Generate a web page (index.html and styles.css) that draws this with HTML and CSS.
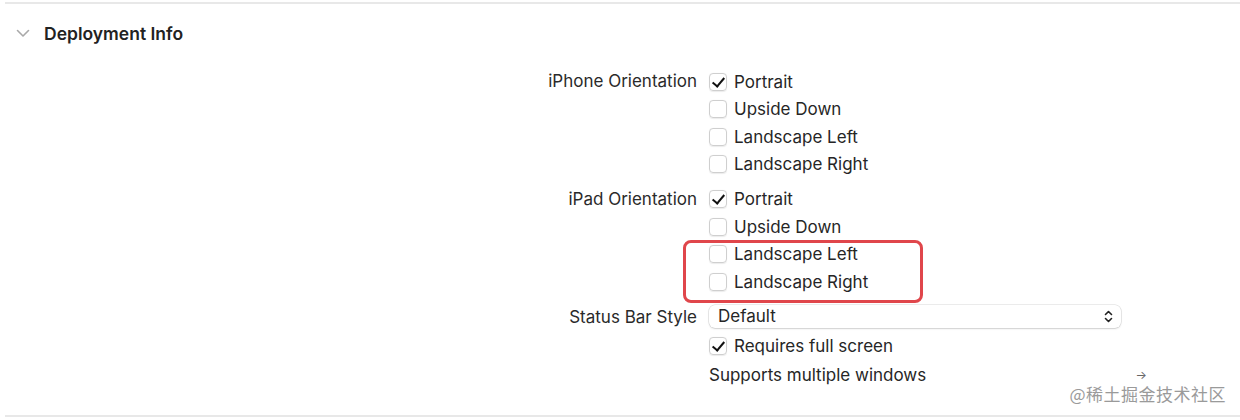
FILE: index.html
```html
<!DOCTYPE html>
<html lang="en">

<head>
    <meta charset="UTF-8">
    <title>Deployment Info</title>
    <link rel="stylesheet" href="styles.css">
</head>

<body>
    <div class="rule top"></div>

    <div class="section-head">
        <svg class="disclosure" width="14" height="9" viewBox="0 0 14 9">
            <path d="M1.5 1.5 L7 7 L12.5 1.5" fill="none" stroke="#a9a9a9" stroke-width="1.6" stroke-linecap="round" stroke-linejoin="round"/>
        </svg>
        <span class="section-title">Deployment Info</span>
    </div>

    <div class="form">
        <!-- iPhone -->
        <div class="label">iPhone Orientation</div>
        <div class="options">
            <div class="option"><span class="check on"></span>Portrait</div>
            <div class="option"><span class="check"></span>Upside Down</div>
            <div class="option"><span class="check"></span>Landscape Left</div>
            <div class="option"><span class="check"></span>Landscape Right</div>
        </div>

        <!-- iPad -->
        <div class="label group">iPad Orientation</div>
        <div class="options group">
            <div class="option"><span class="check on"></span>Portrait</div>
            <div class="option"><span class="check"></span>Upside Down</div>
            <div class="highlighted">
                <div class="option"><span class="check"></span>Landscape Left</div>
                <div class="option"><span class="check"></span>Landscape Right</div>
                <div class="marker"></div>
            </div>
        </div>

        <!-- status bar -->
        <div class="label group status">Status Bar Style</div>
        <div class="group status-ctrl">
            <div class="select">
                <span>Default</span>
                <svg width="9" height="13" viewBox="0 0 9 13">
                    <path d="M1.5 4.5 L4.5 1.5 L7.5 4.5 M1.5 8.5 L4.5 11.5 L7.5 8.5" fill="none" stroke="#222" stroke-width="1.6" stroke-linecap="round" stroke-linejoin="round"/>
                </svg>
            </div>
        </div>

        <div></div>
        <div class="option full"><span class="check on"></span>Requires full screen</div>

        <div></div>
        <div class="multi">
            <span>Supports multiple windows</span>
            <span class="arrow">&rarr;</span>
        </div>
    </div>

    <div class="watermark">@稀土掘金技术社区</div>
    <div class="rule bottom"></div>
</body>

</html>
```

FILE: styles.css
```css
body {
    margin: 0;
    width: 1240px;
    height: 420px;
    overflow: hidden;
    background-color: #fff;
    color: #262626;
    font-family: Inter, "Liberation Sans", Arial, sans-serif;
    font-size: 17px;
    position: relative;
}

.rule {
    height: 2px;
    margin-left: 5px;
    background-color: #e8e8e8;
}

.rule.top {
    margin-top: 2px;
}

.rule.bottom {
    position: absolute;
    left: 0;
    right: 0;
    top: 415px;
}

.section-head {
    display: flex;
    align-items: center;
    height: 22px;
    margin-top: 18px;
    padding-left: 16px;
}

.disclosure {
    margin-right: 14px;
}

.section-title {
    font-weight: 600;
    font-size: 17.5px;
    color: #222;
}

.form {
    display: grid;
    grid-template-columns: 697px 1fr;
    column-gap: 12px;
    margin-top: 24px;
}

.label {
    text-align: right;
    height: 27.5px;
    line-height: 27.5px;
    color: #2a2a2a;
}

.group {
    margin-top: 7.5px;
}

.option {
    display: flex;
    align-items: center;
    height: 27.5px;
}

.check {
    width: 16px;
    height: 16px;
    border: 1px solid #cfcfcf;
    border-radius: 4px;
    box-shadow: 0 0.5px 1px rgba(0, 0, 0, 0.08);
    margin-right: 7px;
    position: relative;
    box-sizing: content-box;
}

.check.on::after {
    content: "";
    position: absolute;
    left: 5px;
    top: 1px;
    width: 5px;
    height: 10px;
    border-right: 2.2px solid #111;
    border-bottom: 2.2px solid #111;
    transform: rotate(40deg);
}

.highlighted {
    position: relative;
}

/* red annotation frame */
.marker {
    position: absolute;
    left: -26px;
    top: -1px;
    width: 234px;
    height: 57px;
    border: 3px solid #e0464b;
    border-radius: 8px;
}

.status {
    height: 25px;
    line-height: 25px;
    margin-top: 9px;
}

.status-ctrl {
    margin-top: 9px;
}

.select {
    display: flex;
    align-items: center;
    justify-content: space-between;
    width: 395px;
    height: 23px;
    padding: 0 8px 0 9px;
    border-radius: 6px;
    box-shadow: 0 0 0 0.5px rgba(0, 0, 0, 0.15), 0 1px 2px rgba(0, 0, 0, 0.12);
}

.full {
    height: 29px;
    margin-top: 2px;
}

.multi {
    display: flex;
    align-items: center;
    height: 29px;
    width: 438px;
    justify-content: space-between;
}

.arrow {
    font-size: 12px;
    color: #666;
    margin-top: -2px;
}

.watermark {
    position: absolute;
    right: 14px;
    top: 381px;
    font-family: "Noto Sans CJK SC", sans-serif;
    font-size: 17px;
    color: #9a9a9a;
    letter-spacing: 0.5px;
}
```
